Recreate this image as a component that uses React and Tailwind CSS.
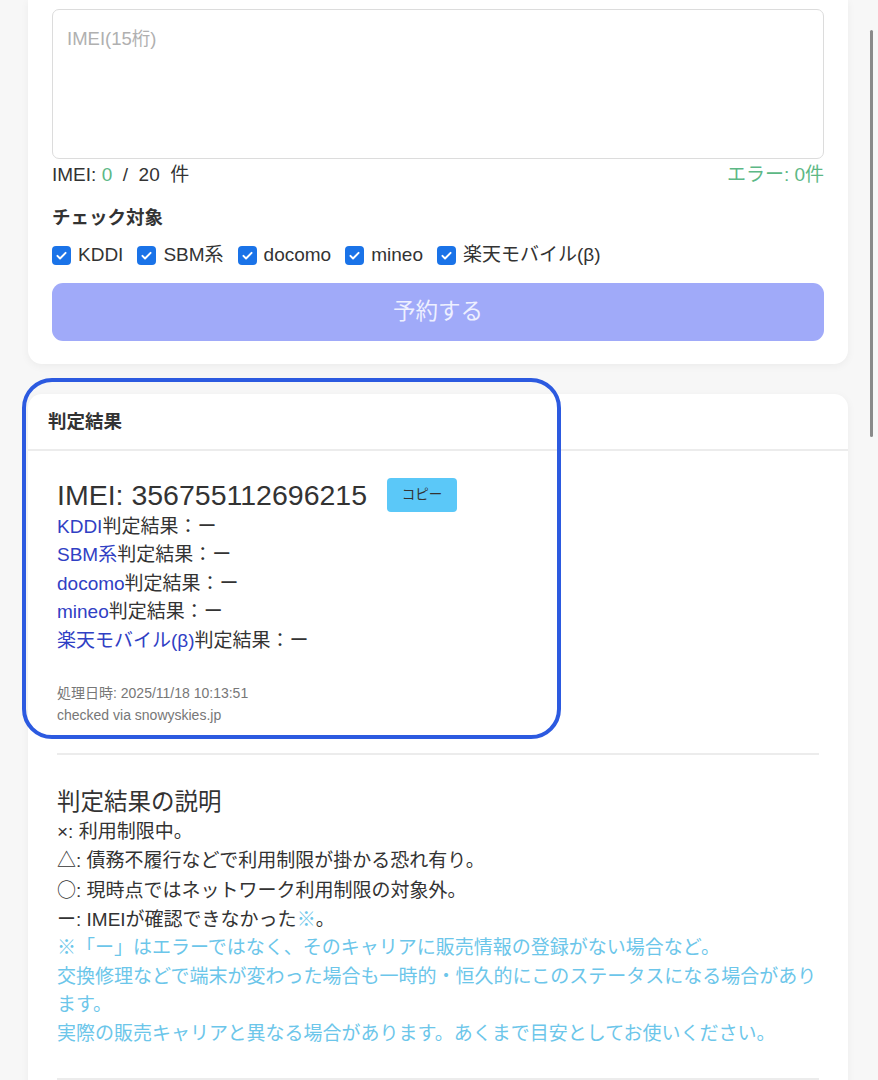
import React from "react";

const font = { fontFamily: '"Liberation Sans", "Noto Sans CJK JP", sans-serif' };
const cjk = { fontFamily: '"Noto Sans CJK JP", sans-serif' };

function Check({ label }) {
  return (
    <label className="flex items-center gap-[7px]">
      <span className="flex h-[19px] w-[19px] items-center justify-center rounded-[4px] bg-[#1a73e8]">
        <svg width="13" height="13" viewBox="0 0 16 16" fill="none">
          <path d="M3 8.5l3.2 3.2L13 4.8" stroke="white" strokeWidth="2.4" strokeLinecap="round" strokeLinejoin="round" />
        </svg>
      </span>
      <span>{label}</span>
    </label>
  );
}

export default function App() {
  const carriers = ["KDDI", "SBM系", "docomo", "mineo", "楽天モバイル(β)"];
  return (
    <div style={font} className="relative h-[1080px] overflow-hidden bg-[#f7f7f7] text-[#333]">
      {/* card 1 */}
      <div className="mx-[28px] w-[820px] rounded-b-[14px] bg-white px-[24px] pb-[23px] pt-[9px] shadow-[0_2px_8px_rgba(0,0,0,0.05)]">
        <div className="h-[150px] rounded-[7px] border border-[#dcdcdc] px-[14px] pt-[15px] text-[18.5px] text-[#b0b0b0]">
          IMEI(15桁)
        </div>
        <div className="mt-[4px] flex justify-between text-[19px] leading-[24px]">
          <span className="whitespace-pre">
            IMEI: <span className="text-[#5cb885]">0</span>  /  20  件
          </span>
          <span className="text-[#5cb885]">エラー: 0件</span>
        </div>
        <div className="mt-[19px] text-[18.5px] font-bold leading-[24px]">チェック対象</div>
        <div className="mt-[13px] flex items-center gap-[14px] text-[19px] leading-[24px]">
          {carriers.map((c) => (
            <Check key={c} label={c} />
          ))}
        </div>
        <div className="mt-[16px] flex h-[58px] items-center justify-center rounded-[11px] bg-[#a0aaf9] text-[22.5px] text-[#eef0ff]">
          予約する
        </div>
      </div>

      {/* card 2 */}
      <div className="mx-[28px] mt-[30px] w-[820px] rounded-t-[14px] bg-white shadow-[0_2px_8px_rgba(0,0,0,0.05)]">
        <div className="flex h-[57px] items-center border-b-2 border-[#ececec] px-[20px] text-[18.5px] font-bold">
          判定結果
        </div>
        <div className="px-[29px] pt-[26px] pb-[40px]">
          <div className="flex items-center">
            <span className="text-[28.5px] leading-[36px]">IMEI: 356755112696215</span>
            <span className="ml-[20px] flex h-[34px] w-[70px] items-center justify-center rounded-[4px] bg-[#5bc8f8] text-[13.5px] text-[#333]">
              コピー
            </span>
          </div>
          <div className="text-[19px] leading-[28.4px]">
            {carriers.map((c) => (
              <div key={c}>
                <span className="text-[#3040c4]">{c}</span>判定結果：ー
              </div>
            ))}
          </div>
          <div className="mt-[27px] text-[14px] leading-[22px] text-[#777]">
            <div>処理日時: 2025/11/18 10:13:51</div>
            <div>checked via snowyskies.jp</div>
          </div>
          <div className="mt-[27px] h-[2px] bg-[#ececec]" />
          <div className="mt-[31px] text-[23.5px] leading-[32px]">判定結果の説明</div>
          <div className="text-[19px] leading-[28.5px]">
            <div>×: 利用制限中。</div>
            <div>△: 債務不履行などで利用制限が掛かる恐れ有り。</div>
            <div>
              <span style={cjk}>○</span>: 現時点ではネットワーク利用制限の対象外。
            </div>
            <div>
              ー: IMEIが確認できなかった<span className="text-[#6cc6ea]">※</span>。
            </div>
            <div className="text-[#6cc6ea]">
              <div>※「ー」はエラーではなく、そのキャリアに販売情報の登録がない場合など。</div>
              <div>交換修理などで端末が変わった場合も一時的・恒久的にこのステータスになる場合があります。</div>
              <div>実際の販売キャリアと異なる場合があります。あくまで目安としてお使いください。</div>
            </div>
          </div>
          <div className="mt-[30px] h-[2px] bg-[#ececec]" />
        </div>
      </div>

      {/* highlight annotation */}
      <div className="pointer-events-none absolute left-[22px] top-[378px] h-[361px] w-[539px] rounded-[30px] border-4 border-[#2c5ae0]" />

      {/* scrollbar */}
      <div className="absolute left-[870px] top-[30px] h-[407px] w-[3px] rounded-full bg-[#8a8a8a]" />
    </div>
  );
}
